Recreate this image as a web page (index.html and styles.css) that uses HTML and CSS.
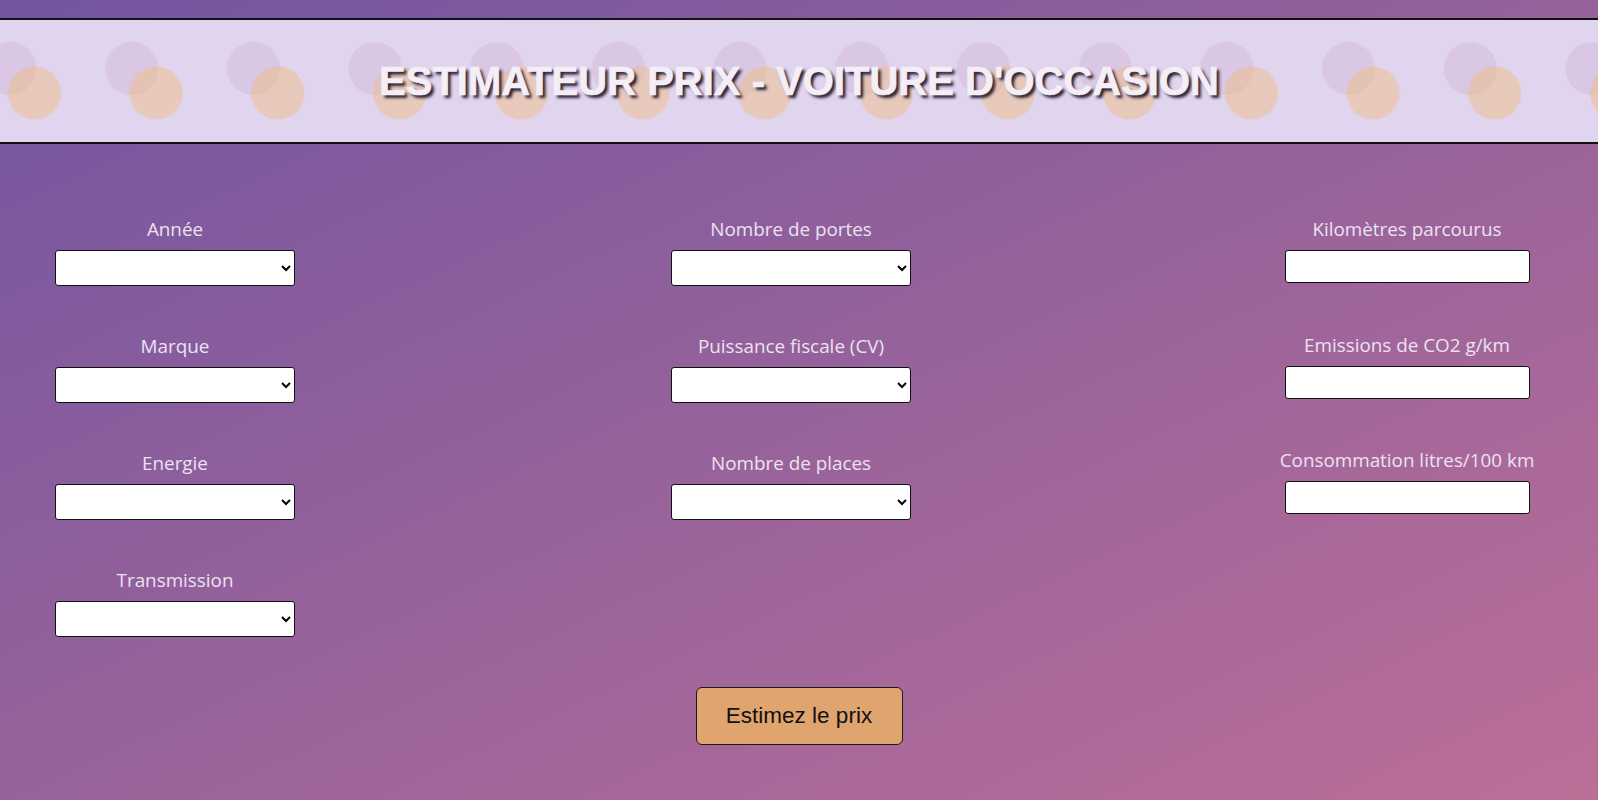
FILE: index.html
```html
<!DOCTYPE html>
<html lang="fr">
<head>
<meta charset="utf-8">
<title>Estimateur prix - voiture d'occasion</title>
<link rel="stylesheet" href="styles.css">
</head>
<body>
  <header class="banner">
    <h1 class="title">ESTIMATEUR PRIX - VOITURE D'OCCASION</h1>
  </header>
  <form class="form">
    <div class="grid">
      <div class="col col-left">
        <div class="field"><label class="label">Année</label><select class="select"></select></div>
        <div class="field"><label class="label">Marque</label><select class="select"></select></div>
        <div class="field"><label class="label">Energie</label><select class="select"></select></div>
        <div class="field"><label class="label">Transmission</label><select class="select"></select></div>
      </div>
      <div class="col col-mid">
        <div class="field"><label class="label">Nombre de portes</label><select class="select"></select></div>
        <div class="field"><label class="label">Puissance fiscale (CV)</label><select class="select"></select></div>
        <div class="field"><label class="label">Nombre de places</label><select class="select"></select></div>
      </div>
      <div class="col col-right">
        <div class="field"><label class="label">Kilomètres parcourus</label><input class="input" type="text"></div>
        <div class="field"><label class="label">Emissions de CO2 g/km</label><input class="input" type="text"></div>
        <div class="field"><label class="label">Consommation litres/100 km</label><input class="input" type="text"></div>
      </div>
    </div>
    <div class="actions">
      <button class="button" type="button">Estimez le prix</button>
    </div>
  </form>
</body>
</html>
```

FILE: styles.css
```css
html {
  height: 100%;
}
body {
  margin: 0;
  min-height: 100vh;
  background: linear-gradient(155deg, #72559f 0%, #bb6f97 100%);
  font-family: "Open Sans", "Noto Sans", sans-serif;
  overflow: hidden;
}
.banner {
  margin-top: 18px;
  height: 122px;
  border-top: 2px solid #111;
  border-bottom: 2px solid #111;
  background-color: #e1d4ef;
  background-image:
    radial-gradient(circle at 74.5px 73px, rgba(238, 190, 135, 0.5) 26px, rgba(238, 190, 135, 0) 27px),
    radial-gradient(circle at 50px 48.5px, #d9c7e3 26px, rgba(217, 199, 227, 0) 27px);
  background-size: 121.7px 122px;
  background-position: -40px 0;
  background-repeat: repeat-x;
  display: flex;
  align-items: center;
  justify-content: center;
}
.title {
  margin: 0;
  font-family: "Liberation Sans", Arial, sans-serif;
  font-weight: 700;
  font-size: 40px;
  line-height: 1;
  color: #f4eef7;
  -webkit-text-stroke: 0.6px #f4eef7;
  text-shadow: 3px 3px 3px #2b2236;
}
.form {
  padding-top: 72px;
}
.grid {
  display: flex;
  align-items: flex-start;
  padding-left: 55px;
}
.col {
  display: flex;
  flex-direction: column;
  align-items: center;
  gap: 47px;
}
.col-left {
  width: 240px;
}
.col-mid {
  width: 240px;
  margin-left: 376px;
}
.col-right {
  width: 254px;
  margin-left: 369px;
  gap: 48.5px;
}
.field {
  display: flex;
  flex-direction: column;
  align-items: center;
  width: 100%;
}
.label {
  font-size: 18.85px;
  line-height: 26px;
  color: #ece2f1;
  margin-bottom: 8px;
  white-space: nowrap;
}
.select {
  box-sizing: border-box;
  width: 240px;
  height: 36px;
  border: 1px solid #111;
  border-radius: 3px;
  background-color: #fff;
  font-size: 16px;
}
.input {
  box-sizing: border-box;
  width: 245px;
  height: 33px;
  border: 1px solid #111;
  border-radius: 3px;
  background: #fff;
  font-size: 16px;
}
.actions {
  display: flex;
  justify-content: center;
  margin-top: 50px;
}
.button {
  box-sizing: border-box;
  width: 207px;
  height: 58px;
  background: #e0a46e;
  border: 1px solid #1a1a1a;
  border-radius: 6px;
  font-family: "Liberation Sans", Arial, sans-serif;
  font-size: 22.5px;
  color: #111;
  padding: 0;
}
```
